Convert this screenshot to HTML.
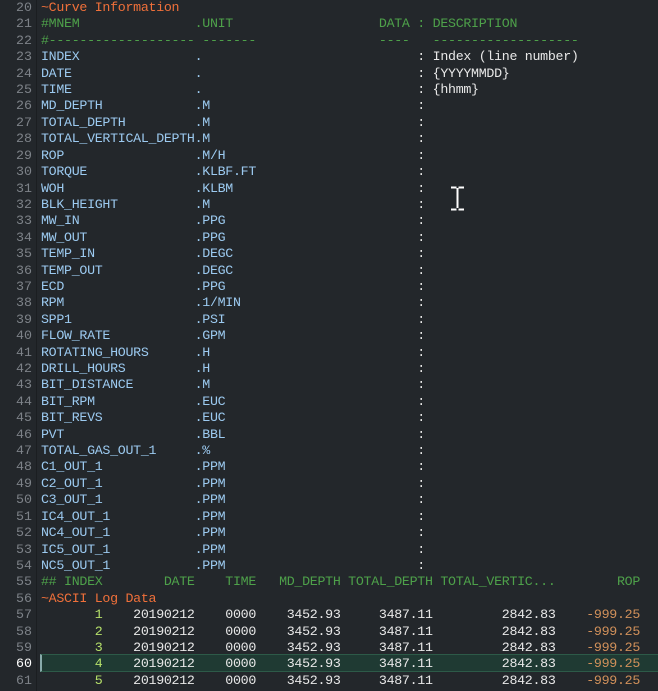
<!DOCTYPE html>
<html><head><meta charset="utf-8"><style>
html,body{margin:0;padding:0;background:#23272b;width:658px;height:691px;overflow:hidden}
.g{position:absolute;left:36px;top:0;width:1px;height:691px;background:#1b1e21}
.l{position:absolute;left:0;height:16.41px;line-height:16.41px;font-family:"Liberation Mono",monospace;font-size:13.3px;letter-spacing:-0.3px;white-space:pre;width:658px}
.n{position:absolute;left:0;width:32px;text-align:right;color:#7d8288;letter-spacing:0}
.t{position:absolute;left:41px}
.o{color:#f0703a}.gr{color:#4ea14a}.b{color:#9ccaf0}.w{color:#e8e8e8}.lg{color:#b5e06a}.r{color:#d0905a}
.hl{position:absolute;left:40px;width:618px;background:#1f3a33;border:1px solid #2d5a48;border-left:2px solid #8aa}
</style></head><body>
<div class="g"></div>
<div class="hl" style="top:654px;height:16px"></div>
<div id="c"></div>
<svg style="position:absolute;left:450px;top:186px" width="16" height="26"><path d="M1 1.5h5.5M8.5 1.5h5.5M7.5 2v20M1 23.5h5.5M8.5 23.5h5.5" stroke="#fff" stroke-width="2" fill="none"/></svg>
<script>
var L=[
['<span class="o">~Curve Information</span>'],
['<span class="gr">#MNEM               .UNIT                   DATA : DESCRIPTION</span>'],
['<span class="gr">#------------------- -------                ----   -------------------</span>'],
];
var names=[['INDEX','.',' Index (line number)'],['DATE','.',' {YYYYMMDD}'],['TIME','.',' {hhmm}'],['MD_DEPTH','.M'],['TOTAL_DEPTH','.M'],['TOTAL_VERTICAL_DEPTH','.M'],['ROP','.M/H'],['TORQUE','.KLBF.FT'],['WOH','.KLBM'],['BLK_HEIGHT','.M'],['MW_IN','.PPG'],['MW_OUT','.PPG'],['TEMP_IN','.DEGC'],['TEMP_OUT','.DEGC'],['ECD','.PPG'],['RPM','.1/MIN'],['SPP1','.PSI'],['FLOW_RATE','.GPM'],['ROTATING_HOURS','.H'],['DRILL_HOURS','.H'],['BIT_DISTANCE','.M'],['BIT_RPM','.EUC'],['BIT_REVS','.EUC'],['PVT','.BBL'],['TOTAL_GAS_OUT_1','.%'],['C1_OUT_1','.PPM'],['C2_OUT_1','.PPM'],['C3_OUT_1','.PPM'],['IC4_OUT_1','.PPM'],['NC4_OUT_1','.PPM'],['IC5_OUT_1','.PPM'],['NC5_OUT_1','.PPM']];
function pad(s,n){while(s.length<n)s+=' ';return s}
names.forEach(function(a){var s='<span class="b">'+pad(a[0],20)+pad(a[1],29)+'</span><span class="w">:'+(a[2]||'')+'</span>';L.push([s]);});
L.push(['<span class="gr">## INDEX        DATE    TIME   MD_DEPTH TOTAL_DEPTH TOTAL_VERTIC...        ROP</span>']);
L.push(['<span class="o">~ASCII Log Data</span>']);
for(var i=1;i<=5;i++)L.push(['<span class="lg">       '+i+'</span><span class="w">    20190212    0000    3452.93     3487.11         2842.83</span><span class="r">    -999.25</span>']);
var h='';
L.forEach(function(x,k){var num=20+k;h+='<div class="l" style="top:'+(k*16.41)+'px"><span class="n"'+(num==60?' style="color:#fff"':'')+'>'+num+'</span><span class="t">'+x[0]+'</span></div>';});
document.getElementById('c').innerHTML=h;
</script>
</body></html>
